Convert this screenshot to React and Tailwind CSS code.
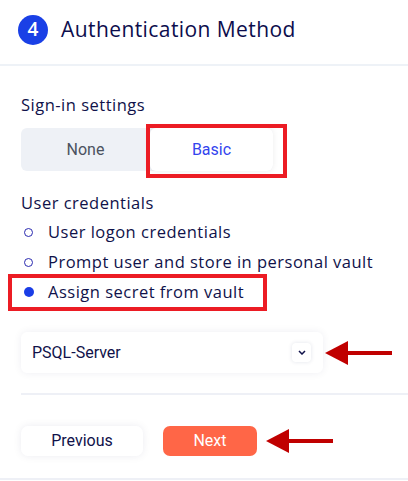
import React from "react";

function Arrow({ className }) {
  return (
    <svg className={className} width="68" height="28" viewBox="0 0 68 28">
      <polygon points="0,14 23,2 23,26" fill="#c00000" />
      <rect x="22" y="12" width="45" height="4" fill="#c00000" />
    </svg>
  );
}

function Radio({ checked, label }) {
  return (
    <div className="flex items-center h-[30px]">
      <div className="w-[27px] flex justify-start pl-[3px]">
        {checked ? (
          <div className="w-[10px] h-[10px] rounded-full bg-[#1a3de6]" />
        ) : (
          <div className="w-[9px] h-[9px] rounded-full border-[1.5px] border-[#2a2ab0]" />
        )}
      </div>
      <span className="text-[16.5px] tracking-[0.03em] text-[#10124a]">{label}</span>
    </div>
  );
}

export default function App() {
  return (
    <div className="w-[408px] h-[481px] bg-white overflow-hidden relative" style={{ fontFamily: "'Open Sans', sans-serif" }}>
      <div className="h-[64px] flex items-center px-[18px] gap-[13px] pb-[5px]">
        <div className="w-[30px] h-[30px] rounded-full bg-[#1a40e6] text-white flex items-center justify-center text-[19px] font-semibold">
          4
        </div>
        <div className="text-[21px] text-[#0c0d4d] tracking-[0.02em]">Authentication Method</div>
      </div>
      <div className="h-[2px] bg-[#eef2f7]" />

      <div className="pl-[21px]">
        <div className="mt-[27px] text-[16.5px] tracking-[0.03em] leading-[24px] text-[#10124a]">Sign-in settings</div>
        <div className="mt-[11px] relative w-[252px] h-[43px] bg-[#eef1f6] rounded-[6px] flex" style={{ fontFamily: "Roboto, sans-serif" }}>
          <div className="flex-1 flex items-center justify-center text-[16px] text-[#4b5260]">None</div>
          <div className="w-[123px] bg-white rounded-[6px] shadow-[0_0_6px_rgba(0,0,0,0.08)] flex items-center justify-center text-[16px] text-[#3344ee]">
            Basic
          </div>
          <div className="absolute left-[125px] top-[-4px] w-[141px] h-[54px] border-[4px] border-[#ec1c24]" />
        </div>

        <div className="mt-[20px] text-[16.5px] tracking-[0.03em] leading-[24px] text-[#10124a]">User credentials</div>
        <div className="mt-[2px] relative">
          <Radio label="User logon credentials" />
          <Radio label="Prompt user and store in personal vault" />
          <div className="relative">
            <Radio checked label="Assign secret from vault" />
            <div className="absolute left-[-13px] top-[-3px] w-[259px] h-[37px] border-[4px] border-[#ec1c24]" />
          </div>
        </div>

        <div className="mt-[25px] flex items-center">
          <div className="w-[302px] h-[41px] bg-white rounded-[6px] shadow-[0_0_8px_rgba(20,30,80,0.07)] flex items-center justify-between pl-[11px] pr-[12px]" style={{ fontFamily: "Roboto, sans-serif" }}>
            <span className="text-[16px] text-[#10124a]">PSQL-Server</span>
            <div className="w-[19px] h-[19px] rounded-[4px] bg-white shadow-[0_0_4px_rgba(20,30,80,0.12)] flex items-center justify-center">
              <svg width="8" height="5" viewBox="0 0 8 5">
                <path d="M1 1 L4 4 L7 1" stroke="#10124a" strokeWidth="1.5" fill="none" />
              </svg>
            </div>
          </div>
          <Arrow className="ml-[2px]" />
        </div>

        <div className="mt-[20px] h-[2px] bg-[#eef0f6]" />

        <div className="mt-[31px] flex items-center gap-[20px]" style={{ fontFamily: "Roboto, sans-serif" }}>
          <div className="w-[122px] h-[30px] bg-white rounded-[7px] shadow-[0_0_8px_rgba(20,30,80,0.08)] flex items-center justify-center text-[16px] text-[#10124a]">
            Previous
          </div>
          <div className="w-[94px] h-[30px] bg-[#ff6647] rounded-[7px] flex items-center justify-center text-[16px] text-white">
            Next
          </div>
          <Arrow className="ml-[-11px]" />
        </div>
      </div>

      <div className="absolute left-0 right-0 top-[478px] h-[2px] bg-[#eef0f6]" />
    </div>
  );
}
